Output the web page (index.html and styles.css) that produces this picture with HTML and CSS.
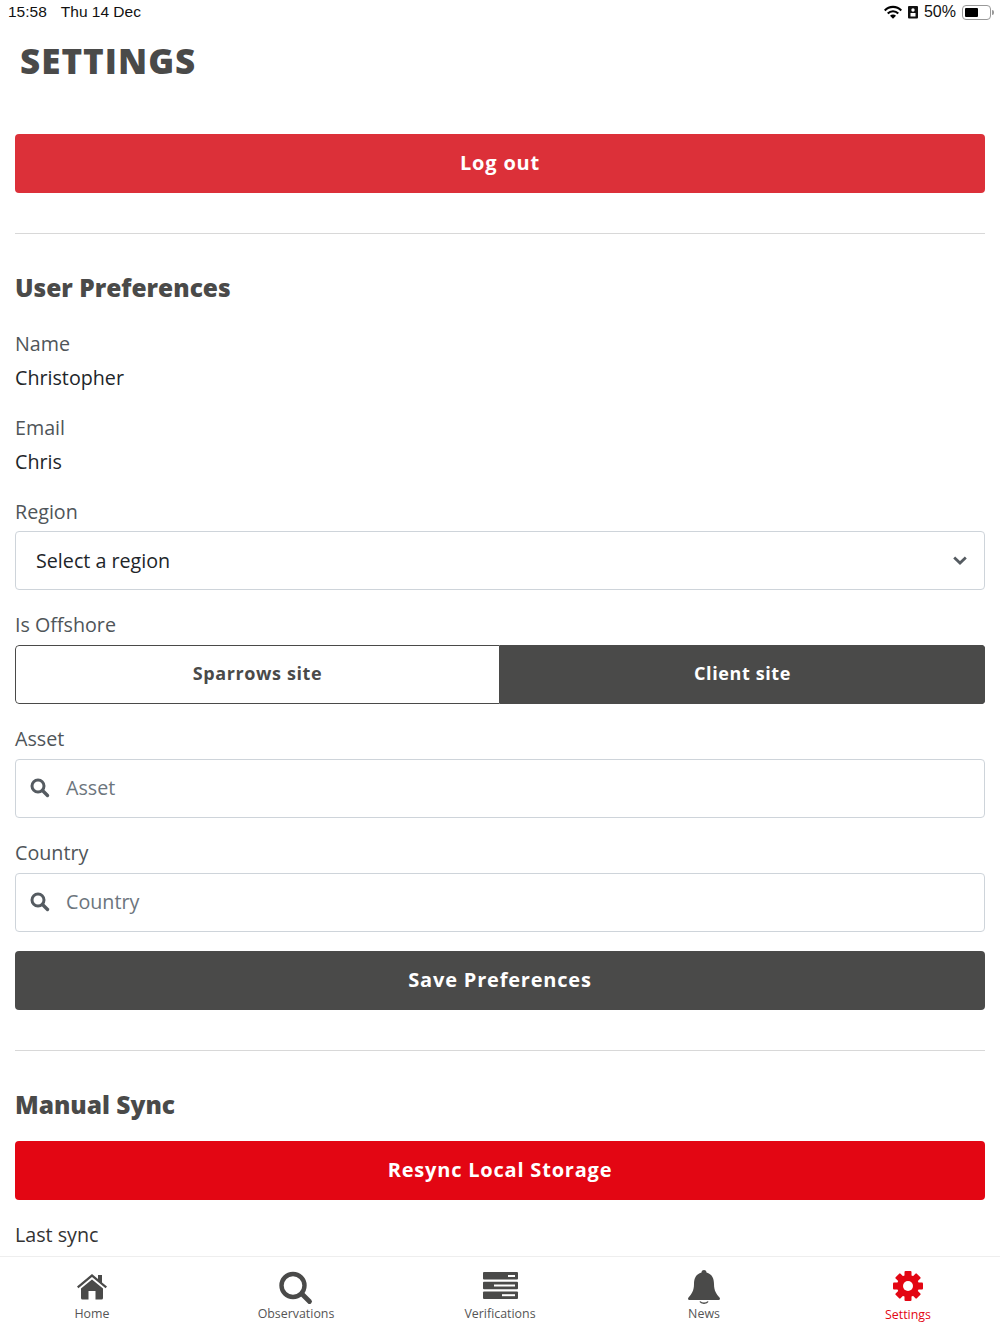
FILE: index.html
```html
<!DOCTYPE html>
<html>
<head>
	<title>Settings</title>
	<link rel="stylesheet" href="styles.css">
</head>
<body>
	<div class="status-bar">
		<div class="status-time"><span>15:58</span><span>Thu 14 Dec</span></div>
		<div class="status-icons">
			<svg width="18" height="14" viewBox="0 0 18 14"><path d="M0 4.700a12.500 12.500 0 0 1 18 0l-1.500 1.600a10.400 10.400 0 0 0-15 0z M3 7.700a8.300 8.300 0 0 1 12 0l-1.500 1.600a6.200 6.200 0 0 0-9 0z M6 10.700a4.200 4.200 0 0 1 6 0L9 13.800z" fill="#000"/></svg>
			<svg width="10" height="14" viewBox="0 0 10 14"><path d="M1 1h8a1 1 0 0 1 1 1v10.500a1 1 0 0 1-1 1H1a1 1 0 0 1-1-1V2a1 1 0 0 1 1-1z" fill="#111"/><circle cx="5" cy="5" r="1.700" fill="#fff"/><rect x="2.500" y="8" width="5" height="3.500" fill="#fff"/></svg>
			<span class="status-percent">50%</span>
			<div class="battery"><div class="battery-level"></div></div>
			<div class="battery-cap"></div>
		</div>
	</div>

	<header class="page-header">
		<h1>SETTINGS</h1>
	</header>

	<main class="content">
		<button class="btn btn-logout">Log out</button>
		<hr>

		<h2>User Preferences</h2>
		<div class="field-label">Name</div>
		<div class="field-value">Christopher</div>
		<div class="field-label">Email</div>
		<div class="field-value">Chris</div>

		<label class="control-label">Region</label>
		<div class="select">
			<span>Select a region</span>
			<svg width="14" height="9" viewBox="0 0 14 9"><path d="M1.200 1.500 7 7l5.800-5.500" fill="none" stroke="#555b61" stroke-width="2.800"/></svg>
		</div>

		<label class="control-label">Is Offshore</label>
		<div class="toggle">
			<div class="toggle-item">Sparrows site</div>
			<div class="toggle-item active">Client site</div>
		</div>

		<label class="control-label">Asset</label>
		<div class="search">
			<svg width="20" height="20" viewBox="0 0 20 20"><circle cx="8" cy="8" r="6" fill="none" stroke="#555b61" stroke-width="3"/><path d="m12.500 12.500 5 5" stroke="#555b61" stroke-width="3.400" stroke-linecap="round"/></svg>
			<span>Asset</span>
		</div>

		<label class="control-label">Country</label>
		<div class="search">
			<svg width="20" height="20" viewBox="0 0 20 20"><circle cx="8" cy="8" r="6" fill="none" stroke="#555b61" stroke-width="3"/><path d="m12.500 12.500 5 5" stroke="#555b61" stroke-width="3.400" stroke-linecap="round"/></svg>
			<span>Country</span>
		</div>

		<button class="btn btn-save">Save Preferences</button>
		<hr>

		<h2>Manual Sync</h2>
		<button class="btn btn-sync">Resync Local Storage</button>
		<div class="field-label last-sync">Last sync</div>
	</main>

	<nav class="tabs">
		<div class="tab">
			<svg width="32" height="34" viewBox="0 -2 32 34"><path d="M1 14.500 16 2l6 5V3h4v7.500l5 4-1.400 1.700L16 5 2.400 16.200z" fill="#4a4a49"/><path d="M5 16.500 16 7.500l11 9V26a1.500 1.500 0 0 1-1.500 1.500H19.500V19h-7v8.500H6.500A1.500 1.500 0 0 1 5 26z" fill="#4a4a49"/></svg>
			<span>Home</span>
		</div>
		<div class="tab">
			<svg width="34" height="34" viewBox="0 -2 34 34"><circle cx="14" cy="13.500" r="11.500" fill="none" stroke="#4a4a49" stroke-width="4.400"/><path d="m23 22 7.500 7.500" stroke="#4a4a49" stroke-width="4.800" stroke-linecap="round"/></svg>
			<span>Observations</span>
		</div>
		<div class="tab">
			<svg width="35" height="34" viewBox="0 -2 35 34"><rect x="0" y="0" width="35" height="7.600" rx="1" fill="#4a4a49"/><rect x="0" y="9.700" width="35" height="7.600" rx="1" fill="#4a4a49"/><rect x="0" y="19.400" width="35" height="7.600" rx="1" fill="#4a4a49"/><rect x="25" y="3" width="7" height="2" fill="#fff"/><rect x="11" y="12.500" width="21" height="2" fill="#fff"/><rect x="19" y="22.200" width="13" height="2" fill="#fff"/></svg>
			<span>Verifications</span>
		</div>
		<div class="tab">
			<svg width="34" height="34" viewBox="0 0 34 34"><path d="M17 0c1.500 0 2.500 1 2.500 2.500C25 4 27 8.500 27 14c0 7 2.500 10 5.500 13.500 1 1.200.5 2.500-1 2.500h-29c-1.500 0-2-1.300-1-2.500C4.500 24 7 21 7 14c0-5.500 2-10 7.500-11.500C14.500 1 15.500 0 17 0z" fill="#4a4a49"/><path d="M13 31.500a4.200 2.500 0 0 0 8 0" fill="none" stroke="#4a4a49" stroke-width="1.500"/></svg>
			<span>News</span>
		</div>
		<div class="tab active">
			<svg width="30" height="34" viewBox="0 -1 30 34"><g fill="#e30613"><circle cx="15" cy="15" r="11"/><rect x="11.500" y="0" width="7" height="30" rx="1"/><rect x="11.500" y="0" width="7" height="30" rx="1" transform="rotate(45 15 15)"/><rect x="11.500" y="0" width="7" height="30" rx="1" transform="rotate(90 15 15)"/><rect x="11.500" y="0" width="7" height="30" rx="1" transform="rotate(135 15 15)"/></g><circle cx="15" cy="15" r="5" fill="#fff"/></svg>
			<span>Settings</span>
		</div>
	</nav>
</body>
</html>
```

FILE: styles.css
```css
* { box-sizing: border-box; }
html, body { height: 100%; }
body {
	margin: 0;
	height: 1334px;
	display: flex;
	flex-direction: column;
	overflow: hidden;
	background: #fff;
	color: #212529;
	font-family: "Open Sans", sans-serif;
	font-size: 19.7px;
}

.status-bar {
	display: flex;
	justify-content: space-between;
	align-items: center;
	height: 25px;
	padding: 0 6px 1px 8px;
	color: #111;
	font-family: "Liberation Sans", Arial, sans-serif;
	font-size: 15.5px;
}
.status-time span { margin-right: 14px; }
.status-icons { display: flex; align-items: center; gap: 6px; }
.status-percent { font-size: 16px; }
.battery {
	width: 29px;
	height: 15px;
	padding: 2px;
	border: 1px solid #999;
	border-radius: 4px;
}
.battery-level { width: 55%; height: 100%; background: #000; border-radius: 1px; }
.battery-cap {
	width: 2px;
	height: 5px;
	margin-left: -5px;
	background: #999;
	border-radius: 0 2px 2px 0;
}

.page-header { height: 75px; padding-left: 20px; }
.page-header h1 {
	margin: 0;
	padding-top: 12px;
	color: #4a4a49;
	font-size: 35px;
	font-weight: 800;
	line-height: 47px;
	letter-spacing: 1px;
}

.content { flex: 1; min-height: 0; overflow: hidden; padding: 34px 15px 0; }

.btn {
	display: block;
	width: 100%;
	height: 59px;
	padding: 0 0 2px;
	border: 0;
	border-radius: 4px;
	color: #fff;
	font-family: inherit;
	font-size: 20px;
	font-weight: 700;
	letter-spacing: 0.8px;
}
.btn-logout { background: #dc3039; }
.btn-save { margin-top: 19px; background: #4a4a49; }
.btn-sync { background: #e30613; }

hr {
	height: 1px;
	margin: 40px 0 0;
	border: 0;
	background: #d8d8d8;
}

h2 {
	margin: 0 0 18px;
	padding-top: 36px;
	color: #4a4a49;
	font-size: 24.500px;
	font-weight: 800;
	line-height: 36px;
}

.field-label, .control-label {
	display: block;
	color: #4f5559;
	line-height: 30px;
}
.field-label { margin-top: 23px; }
.field-value { margin-top: 4px; line-height: 30px; }
.field-value + .field-label { margin-top: 20px; }
.control-label { margin-top: 20px; margin-bottom: 5px; }
.field-value + .control-label { margin-bottom: 4px; }
.last-sync { margin-top: 20px; color: #333; }

.select, .search {
	display: flex;
	align-items: center;
	height: 59px;
	background: #fff;
	border: 1px solid #ced4da;
	border-radius: 4px;
}
.select { justify-content: space-between; padding: 0 17px 0 20px; }
.search { gap: 16px; padding: 0 0 2px 14px; color: #6c757d; }

.toggle {
	display: flex;
	height: 59px;
	border-radius: 4px;
	overflow: hidden;
}
.toggle-item {
	flex: 1;
	display: flex;
	align-items: center;
	justify-content: center;
	padding-bottom: 4px;
	border: 1px solid #4a4a49;
	border-radius: 4px 0 0 4px;
	color: #4a4a49;
	font-size: 18px;
	font-weight: 700;
	letter-spacing: 0.6px;
}
.toggle-item.active { background: #4a4a49; color: #fff; border-radius: 0; }

.tabs {
	display: flex;
	justify-content: center;
	height: 78px;
	border-top: 1px solid #eee;
	background: #fff;
}
.tab {
	flex: 0 0 204px;
	display: flex;
	flex-direction: column;
	align-items: center;
	padding-top: 13px;
	color: #555;
	font-size: 12.400px;
	line-height: 18px;
}
.tab svg { overflow: visible; }
.tab span { margin-top: 1px; }
.tab.active { color: #e30613; }
.tab.active span { margin-top: 2px; }
```
